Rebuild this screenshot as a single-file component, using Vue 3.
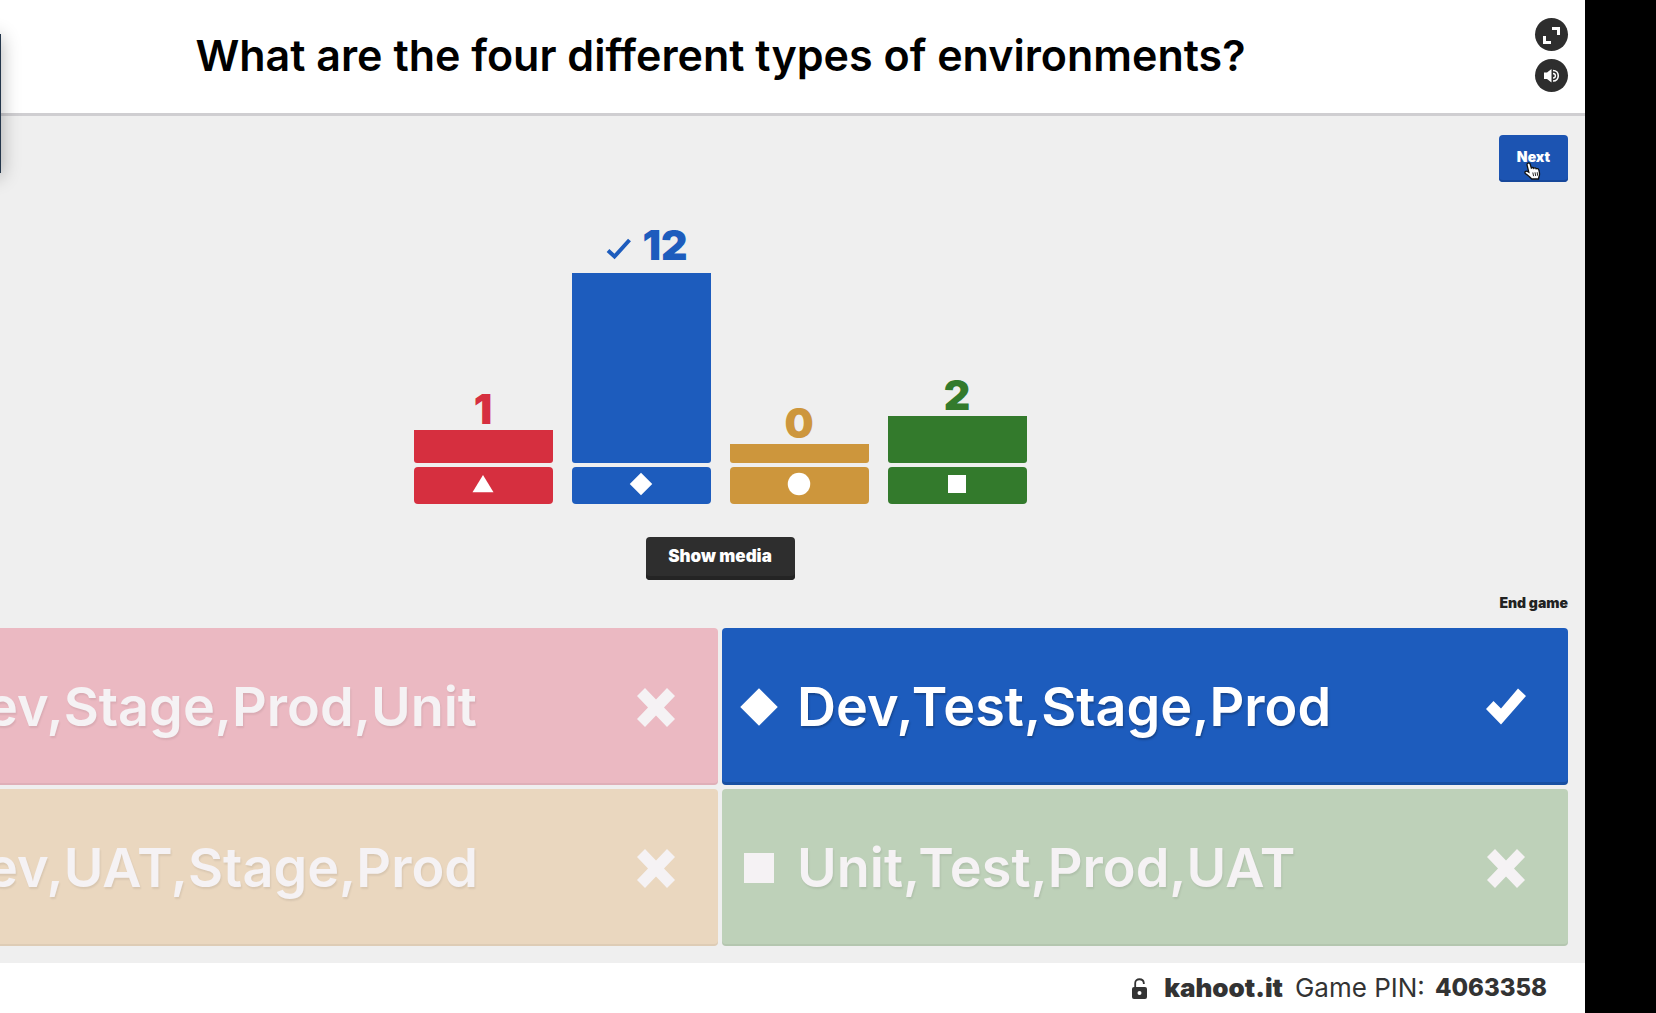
<script setup>
const results = [
  { shape: 'triangle', count: 1, height: 33, correct: false },
  { shape: 'diamond', count: 12, height: 190, correct: true },
  { shape: 'circle', count: 0, height: 19, correct: false },
  { shape: 'square', count: 2, height: 47, correct: false },
]

const answers = [
  { shape: 'triangle', text: 'Dev,Stage,Prod,Unit', correct: false },
  { shape: 'diamond', text: 'Dev,Test,Stage,Prod', correct: true },
  { shape: 'circle', text: 'Dev,UAT,Stage,Prod', correct: false },
  { shape: 'square', text: 'Unit,Test,Prod,UAT', correct: false },
]

const shapes = {
  triangle: 'M16 4 L30 27 H2 Z',
  diamond: 'M16 1 L31 16 L16 31 L1 16 Z',
  circle: 'M16 1 A15 15 0 1 1 16 31 A15 15 0 1 1 16 1 Z',
  square: 'M4 4 H28 V28 H4 Z',
}
</script>

<template>
  <div class="screen">
    <div class="side-card"></div>
    <div class="game">
      <header class="header">
        <h1>What are the four different types of environments?</h1>
        <div class="controls">
          <button class="round" type="button" aria-label="Fullscreen">
            <svg viewBox="0 0 33 33" fill="none" stroke="#fff" stroke-width="3">
              <path d="M17 10.500H23.500V17M9.500 18V24.500H16" />
            </svg>
          </button>
          <button class="round" type="button" aria-label="Sound">
            <svg viewBox="0 0 33 33" fill="none">
              <path d="M9 13.500H12L16.500 10V23.500L12 20H9Z" fill="#fff" />
              <path d="M18 11.500C25 11.500 25 22 18 22" stroke="#fff" stroke-width="1.600" />
              <path d="M18 14.500C21.200 14.500 21.200 19 18 19" stroke="#fff" stroke-width="1.400" />
            </svg>
          </button>
        </div>
      </header>

      <main class="board">
        <div class="top-row">
          <button class="next" type="button">
            Next
            <svg class="pointer" viewBox="0 0 17 18" aria-hidden="true">
              <path
                d="M4 1.200C5 .7 5.900 1.200 6.200 2.200L7.300 6C8 5.200 9.300 5.400 9.700 6.300C10.600 5.500 11.900 5.800 12.200 6.800C13.300 6.200 14.500 6.700 14.800 7.900C15.500 10.500 16.200 12.300 15 14.500L14.500 17H7.700C6 15 3.500 13.200 1.400 11.500C.3 10.200 1.500 8.700 3 9.300L4.800 10.300L3.100 3.200C2.900 2.300 3.200 1.500 4 1.200Z"
                fill="#fff" stroke="#111" stroke-width="1.300" />
              <path d="M8.800 10.500L9.600 14.200M11 10.300L11.700 14M13.200 10.200L13.600 13.700" stroke="#111" stroke-width=".9" />
            </svg>
          </button>
        </div>

        <section class="chart" aria-label="Answer counts">
          <div v-for="r in results" :key="r.shape" class="column" :class="r.shape">
            <div class="count" :class="{ winner: r.correct }">
              <svg v-if="r.correct" class="tick" viewBox="0 0 26 22" aria-hidden="true">
                <path d="M2 12.500L8.500 18.500L23.500 2" fill="none" stroke="currentColor" stroke-width="4" />
              </svg>
              <span>{{ r.count }}</span>
            </div>
            <div class="bar" :style="{ height: r.height + 'px' }"></div>
            <div class="base">
              <svg viewBox="0 0 32 32" aria-hidden="true"><path :d="shapes[r.shape]" fill="#fff" /></svg>
            </div>
          </div>
        </section>

        <button class="media" type="button">Show media</button>
        <a class="end" href="#">End game</a>

        <section class="answers">
          <button
            v-for="a in answers" :key="a.shape" type="button"
            class="answer" :class="[a.shape, { faded: !a.correct }]"
          >
            <svg class="shape" viewBox="0 0 32 32" aria-hidden="true"><path :d="shapes[a.shape]" fill="#fff" /></svg>
            <span class="label">{{ a.text }}</span>
            <svg class="mark" viewBox="0 0 40 40" aria-hidden="true">
              <path v-if="a.correct" d="M0 22L7.500 14L15 21.500L32 1.500L40 9L15 37.500Z" fill="#fff" />
              <path v-else d="M9 1L20 12.500L31 1L39 9L28 20.500L39 32L31 40L20 28.500L9 40L1 32L12 20.500L1 9Z" fill="#fff" />
            </svg>
          </button>
        </section>
      </main>

      <footer class="footer">
        <svg class="lock" viewBox="0 0 15 21" aria-hidden="true">
          <path d="M3.200 10V5C3.200 0 11.500 0 11.800 5V6" fill="none" stroke="#333" stroke-width="1.800" />
          <rect y="9" width="15" height="12" rx="2" fill="#333" />
          <circle cx="7.500" cy="15" r="2" fill="#fff" />
        </svg>
        <strong class="site">kahoot.it</strong>
        <span class="pin-label">Game PIN:</span>
        <strong class="pin">4063358</strong>
      </footer>
    </div>
  </div>
</template>

<style>
body {
  margin: 0;
  background: #000;
}
</style>

<style scoped>
.screen {
  position: relative;
  display: flex;
  min-height: 100vh;
  padding-right: 71px;
  box-sizing: border-box;
  overflow: hidden;
  background: #000;
  font-family: Inter, "Liberation Sans", sans-serif;
}

button {
  border: 0;
  padding: 0;
  font-family: inherit;
  color: #fff;
  cursor: pointer;
}

svg {
  display: block;
}

.side-card {
  position: absolute;
  z-index: 1;
  top: 34px;
  left: -99px;
  width: 100px;
  height: 139px;
  background: #24364b;
  box-shadow: 0 3px 18px rgba(0, 0, 0, 0.3);
}

/* The game window hangs over the left edge of the screen. */
.game {
  flex: 1;
  display: flex;
  flex-direction: column;
  margin-left: -144px;
  background: #efefef;
}

.header {
  position: relative;
  display: flex;
  align-items: center;
  justify-content: center;
  box-sizing: border-box;
  height: 116px;
  padding-bottom: 4px;
  border-bottom: 3px solid #cfced1;
  background: #fff;
}

h1 {
  margin: 0;
  font-size: 43px;
  line-height: 56px;
  font-weight: 600;
  color: #000;
  white-space: nowrap;
}

.controls {
  position: absolute;
  top: 18px;
  right: 17px;
  display: flex;
  flex-direction: column;
  gap: 8px;
}

.round {
  width: 33px;
  height: 33px;
  border-radius: 50%;
  background: #2e2e2e;
}

.board {
  flex: 1;
  display: flex;
  flex-direction: column;
  padding: 19px 17px 17px 16px;
}

.top-row {
  display: flex;
  justify-content: flex-end;
}

.next {
  position: relative;
  width: 69px;
  height: 47px;
  padding-bottom: 4px;
  border-radius: 4px;
  background: #1c54b2;
  box-shadow: inset 0 -2px #17479a;
  font-size: 14px;
  font-weight: 900;
}

.pointer {
  position: absolute;
  top: 27px;
  left: 25px;
  width: 17px;
  height: 18px;
}

.chart {
  flex: 1;
  display: flex;
  justify-content: center;
  align-items: flex-end;
  gap: 19px;
}

.column {
  width: 139px;
}

.count {
  display: flex;
  justify-content: center;
  align-items: center;
  gap: 10px;
  height: 41px;
  font-size: 41px;
  line-height: 41px;
  font-weight: 900;
}

.winner {
  margin-bottom: 7px;
  padding-left: 12px;
}

.tick {
  width: 26px;
  height: 22px;
  margin-top: 6px;
}

.bar,
.base {
  background: currentColor;
}

.bar {
  border-radius: 0 0 3px 3px;
}

.base {
  display: flex;
  align-items: center;
  justify-content: center;
  box-sizing: border-box;
  height: 37px;
  margin-top: 4px;
  padding-bottom: 4px;
  border-radius: 4px;
}

.base svg {
  width: 24px;
  height: 24px;
}

.column.triangle { color: #d62f3f; }
.column.diamond { color: #1d5cbd; }
.column.circle { color: #cd963c; }
.column.square { color: #337a2c; }

.media {
  align-self: center;
  width: 149px;
  height: 43px;
  margin-top: 33px;
  padding-bottom: 5px;
  border-radius: 4px;
  background: #2e2e2e;
  box-shadow: inset 0 -4px #242424;
  font-size: 17px;
  font-weight: 900;
}

.end {
  align-self: flex-end;
  margin-top: 15px;
  font-size: 14px;
  line-height: 16px;
  font-weight: 900;
  color: #222;
  text-decoration: none;
}

.answers {
  display: grid;
  grid-template-columns: 1fr 1fr;
  gap: 4px;
  margin-top: 17px;
}

.answer {
  display: flex;
  align-items: center;
  height: 157px;
  padding: 0 42px 0 17px;
  border-radius: 4px;
  box-shadow: inset 0 -3px rgba(0, 0, 0, 0.14);
  text-align: left;
}

.answer.diamond { background: #1d5cbd; }
.answer.triangle { background: #ebb9c2; }
.answer.circle { background: #ead7bf; }
.answer.square { background: #bed1b9; }

.answer.faded {
  box-shadow: inset 0 -2px rgba(0, 0, 0, 0.05);
}

.shape {
  width: 40px;
  height: 40px;
}

.label {
  flex: 1;
  margin-left: 18px;
  font-size: 54px;
  line-height: 64px;
  font-weight: 600;
  white-space: nowrap;
  text-shadow: 1px 2px 2px rgba(0, 0, 0, 0.25);
}

.mark {
  width: 40px;
  height: 40px;
}

.faded .label {
  color: #f5f2f4;
  text-shadow: 1px 2px 2px rgba(0, 0, 0, 0.08);
}

.faded path {
  fill: #f5f2f4;
}

.footer {
  display: flex;
  align-items: center;
  justify-content: flex-end;
  height: 50px;
  padding-right: 38px;
  background: #fff;
  font-size: 26px;
  line-height: 32px;
  color: #333;
}

.lock {
  width: 15px;
  height: 21px;
}

.site {
  margin-left: 17px;
  font-weight: 900;
}

.pin-label {
  margin-left: 12px;
}

.pin {
  margin-left: 10px;
  font-size: 24px;
  font-weight: 800;
}
</style>
